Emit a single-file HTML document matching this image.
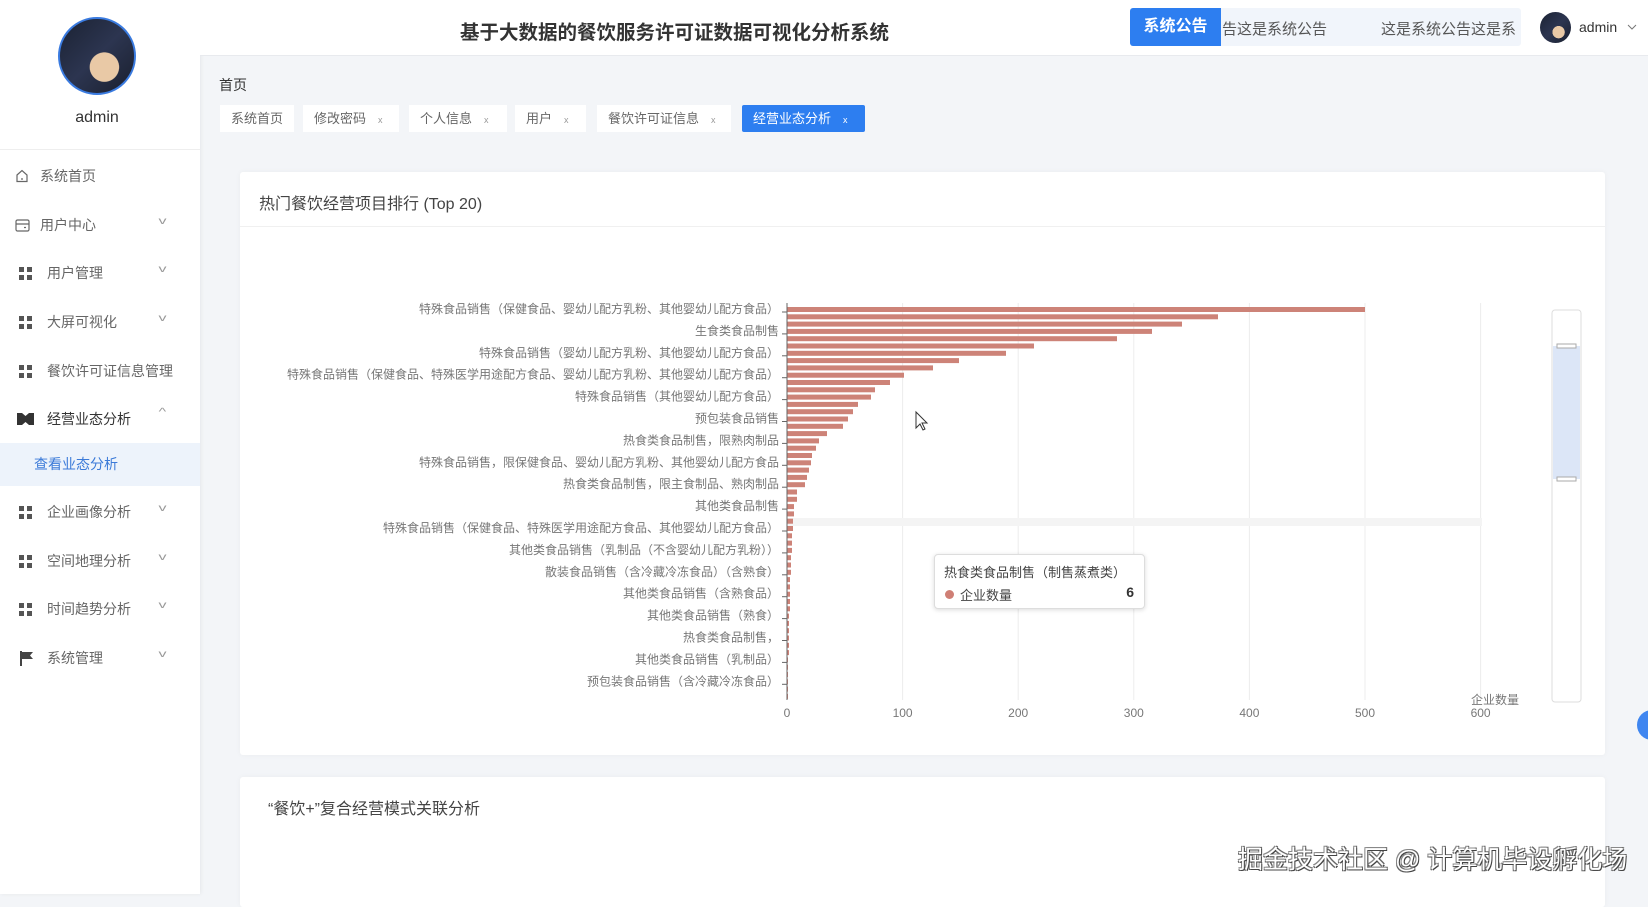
<!DOCTYPE html>
<html><head><meta charset="utf-8">
<style>
*{margin:0;padding:0;box-sizing:border-box}
body{width:1648px;height:894px;overflow:hidden;background:#f3f5f8;font-family:"Liberation Sans","Noto Sans CJK SC",sans-serif;position:relative;color:#333}
.abs{position:absolute}
#side{left:0;top:0;width:200px;height:894px;background:#fff;box-shadow:1px 0 4px rgba(0,0,0,.06)}
.av{border-radius:50%;background:radial-gradient(circle at 60% 65%,#e9c9a6 0 22%,transparent 23%),linear-gradient(135deg,#1b2233 0%,#2c3550 50%,#1a1f2e 100%);}
.mi{position:absolute;left:0;width:200px;height:40px;font-size:14px;color:#666;line-height:40px}
.mi .ic{position:absolute;left:19px;top:14px;width:13px;height:13px;background:
linear-gradient(#555,#555) 0 0/5px 5px no-repeat,linear-gradient(#555,#555) 8px 0/5px 5px no-repeat,linear-gradient(#555,#555) 0 8px/5px 5px no-repeat,linear-gradient(#555,#555) 8px 8px/5px 5px no-repeat}
.mi .t{position:absolute;left:47px}
.mi .ch{position:absolute;left:160px;top:-3px;font-size:10px;color:#999;transform:scaleX(1.6)}
#hdr{left:200px;top:0;width:1448px;height:56px;background:#fff;border-bottom:1px solid #e8eaee}
.tab{position:absolute;top:105px;height:27px;background:#fff;font-size:13px;color:#666;line-height:27px;padding-left:11px}
.tab span{font-size:9px;color:#999;margin-left:12px}
.card{position:absolute;left:240px;width:1365px;background:#fff;border-radius:3px;box-shadow:0 0 6px rgba(0,0,0,.04)}
</style></head><body>
<div id="side" class="abs">
  <div class="abs av" style="left:58px;top:17px;width:78px;height:78px;border:2px solid #3a7be0"></div>
  <div class="abs" style="left:0;width:194px;top:109px;text-align:center;font-size:16px;color:#333">admin</div>
  <div class="abs" style="left:0;top:149px;width:200px;height:1px;background:#eee"></div>
  <div class="mi" style="top:156px"><svg class="abs" style="left:15px;top:13px" width="14" height="14" viewBox="0 0 14 14"><path d="M2 6 L7 1.5 L12 6 V12.5 H2 Z M6 10 H8" fill="none" stroke="#666" stroke-width="1.2"/></svg><span class="t" style="left:40px">系统首页</span></div>
  <div class="mi" style="top:205px"><svg class="abs" style="left:15px;top:14px" width="15" height="13" viewBox="0 0 15 13"><rect x="1" y="1" width="13" height="11" rx="1.5" fill="none" stroke="#666" stroke-width="1.2"/><path d="M1 5 H14 M9 8.5 H11" stroke="#666" stroke-width="1.2"/></svg><span class="t" style="left:40px">用户中心</span><span class="ch">v</span></div>
  <div class="mi" style="top:253px"><i class="ic"></i><span class="t">用户管理</span><span class="ch">v</span></div>
  <div class="mi" style="top:302px"><i class="ic"></i><span class="t">大屏可视化</span><span class="ch">v</span></div>
  <div class="mi" style="top:351px"><i class="ic"></i><span class="t">餐饮许可证信息管理</span></div>
  <div class="mi" style="top:399px;color:#333"><svg class="abs" style="left:17px;top:14px" width="17" height="12" viewBox="0 0 17 12"><path d="M0 0 H5 L8.5 3 L12 0 H17 V12 H12 L8.5 9 L5 12 H0 Z" fill="#333"/></svg><span class="t">经营业态分析</span><span class="ch" style="top:-6px">^</span></div>
  <div class="abs" style="left:0;top:443px;width:200px;height:43px;background:#edf3fb"></div>
  <div class="abs" style="left:34px;top:454px;font-size:14px;color:#3b7ad8">查看业态分析</div>
  <div class="mi" style="top:492px"><i class="ic"></i><span class="t">企业画像分析</span><span class="ch">v</span></div>
  <div class="mi" style="top:541px"><i class="ic"></i><span class="t">空间地理分析</span><span class="ch">v</span></div>
  <div class="mi" style="top:589px"><i class="ic"></i><span class="t">时间趋势分析</span><span class="ch">v</span></div>
  <div class="mi" style="top:638px"><svg class="abs" style="left:20px;top:13px" width="14" height="15" viewBox="0 0 14 15"><path d="M1 0 V15" stroke="#444" stroke-width="2"/><path d="M2 1 H13 L10 4.5 L13 8 H2 Z" fill="#444"/></svg><span class="t">系统管理</span><span class="ch">v</span></div>
</div>
<div id="hdr" class="abs">
  <div class="abs" style="left:260px;top:16px;font-size:19.5px;font-weight:bold;color:#333">基于大数据的餐饮服务许可证数据可视化分析系统</div>
  <div class="abs" style="left:930px;top:8px;width:391px;height:38px;background:#f1f5fb;border-radius:3px"></div>
  <div class="abs" style="left:930px;top:8px;width:91px;height:38px;background:#2d7ef0;border-radius:3px 0 0 3px;color:#fff;font-weight:bold;font-size:16px;line-height:38px;text-align:center">系统公告</div>
  <div class="abs" style="left:1022px;top:18px;font-size:15px;color:#555">告这是系统公告</div>
  <div class="abs" style="left:1181px;top:18px;font-size:15px;color:#555">这是系统公告这是系</div>
  <div class="abs av" style="left:1340px;top:12px;width:31px;height:31px"></div>
  <div class="abs" style="left:1379px;top:19px;font-size:14px;color:#333">admin</div>
  <svg class="abs" style="left:1427px;top:24px" width="10" height="7" viewBox="0 0 10 7"><path d="M1 1 L5 5 L9 1" fill="none" stroke="#777" stroke-width="1"/></svg>
</div>
<div class="abs" style="left:219px;top:75px;font-size:14px;color:#333">首页</div>
<div class="tab" style="left:220px;width:74px">系统首页</div>
<div class="tab" style="left:303px;width:96px">修改密码<span>x</span></div>
<div class="tab" style="left:409px;width:98px">个人信息<span>x</span></div>
<div class="tab" style="left:515px;width:71px">用户<span>x</span></div>
<div class="tab" style="left:597px;width:134px">餐饮许可证信息<span>x</span></div>
<div class="tab" style="left:742px;width:123px;background:#2d7ef0;color:#fff;border-radius:2px">经营业态分析<span style="color:#fff">x</span></div>

<div class="card" style="top:172px;height:583px">
  <div class="abs" style="left:19px;top:18px;font-size:16px;color:#444">热门餐饮经营项目排行 (Top 20)</div>
  <div class="abs" style="left:0;top:54px;width:1365px;height:1px;background:#f0f0f0"></div>
</div>
<svg class="abs" style="left:0;top:0" width="1648" height="894" id="ch"></svg>
<div class="abs" style="left:934px;top:554px;width:211px;height:55px;background:#fff;border:1px solid #ddd;border-radius:4px;box-shadow:0 1px 5px rgba(0,0,0,.15)">
  <div class="abs" style="left:9px;top:7px;font-size:13px;color:#444">热食类食品制售（制售蒸煮类）</div>
  <div class="abs" style="left:10px;top:35px;width:9px;height:9px;border-radius:50%;background:#cf7f75"></div>
  <div class="abs" style="left:25px;top:30px;font-size:13px;color:#444">企业数量</div>
  <div class="abs" style="right:10px;top:29px;font-size:14px;font-weight:bold;color:#333">6</div>
</div>
<div class="card" style="top:777px;height:130px">
  <div class="abs" style="left:28px;top:18px;font-size:16px;color:#444">“餐饮+”复合经营模式关联分析</div>
</div>
<div class="abs" style="left:1238px;top:840px;font-size:25px;color:#fff;text-shadow:1px 1px 0 #444,-1px -1px 0 #888,1px -1px 0 #666,-1px 1px 0 #666;white-space:nowrap">掘金技术社区 @ 计算机毕设孵化场</div>
<div class="abs" style="left:1637px;top:710px;width:30px;height:30px;border-radius:50%;background:#3f86f0"></div>
<script>
var s='',ax=787,top0=307,p=7.3;
var v=[578,431,395,365,330,247,219,172,146,117,103,88,84,71,66,61,56,40,32,29,25,24,22,20,18,10,10,7,7,6,6,5,5,5,4,4,4,3,3,3,3,3,2,2,2,2,2,2,1,1,1,1,1,1];
for(var i=0;i<7;i++){var x=ax+i*115.6;s+='<line x1="'+x+'" y1="303" x2="'+x+'" y2="700" stroke="#ececec"/>';s+='<text x="'+x+'" y="717" font-size="12" fill="#777" text-anchor="middle">'+(i*100)+'</text>';}
s+='<rect x="787" y="518" width="695" height="8" fill="#f4f4f4"/>';
v.forEach(function(w,i){s+='<rect x="'+ax+'" y="'+(top0+i*p)+'" width="'+w+'" height="5" fill="#cd8378"/>';});
s+='<line x1="'+ax+'" y1="303" x2="'+ax+'" y2="700" stroke="#666"/>';
var L=["特殊食品销售（保健食品、婴幼儿配方乳粉、其他婴幼儿配方食品）","生食类食品制售","特殊食品销售（婴幼儿配方乳粉、其他婴幼儿配方食品）","特殊食品销售（保健食品、特殊医学用途配方食品、婴幼儿配方乳粉、其他婴幼儿配方食品）","特殊食品销售（其他婴幼儿配方食品）","预包装食品销售","热食类食品制售，限熟肉制品","特殊食品销售，限保健食品、婴幼儿配方乳粉、其他婴幼儿配方食品","热食类食品制售，限主食制品、熟肉制品","其他类食品制售","特殊食品销售（保健食品、特殊医学用途配方食品、其他婴幼儿配方食品）","其他类食品销售（乳制品（不含婴幼儿配方乳粉））","散装食品销售（含冷藏冷冻食品）（含熟食）","其他类食品销售（含熟食品）","其他类食品销售（熟食）","热食类食品制售，","其他类食品销售（乳制品）","预包装食品销售（含冷藏冷冻食品）"];
L.forEach(function(t,i){var y=309+i*21.9;s+='<line x1="782" y1="'+(y+3)+'" x2="787" y2="'+(y+3)+'" stroke="#666"/><text x="779" y="'+(y+4)+'" font-size="12" fill="#777" text-anchor="end">'+t+'</text>';});
s+='<text x="1495" y="704" font-size="12" fill="#777" text-anchor="middle">企业数量</text>';
s+='<rect x="1552" y="310" width="29" height="392" rx="3" fill="#fff" stroke="#ddd"/><rect x="1553" y="346" width="27" height="133" fill="#dce6f7"/><rect x="1557" y="344" width="19" height="4" fill="#fff" stroke="#aaa"/><rect x="1557" y="477" width="19" height="4" fill="#fff" stroke="#aaa"/>';
s+='<path d="M916 412 L916 428 L920 424 L923 430 L925 429 L922 423 L927 423 Z" fill="#fff" stroke="#333" stroke-width="1"/>';
document.getElementById('ch').innerHTML=s;
</script>
</body></html>
